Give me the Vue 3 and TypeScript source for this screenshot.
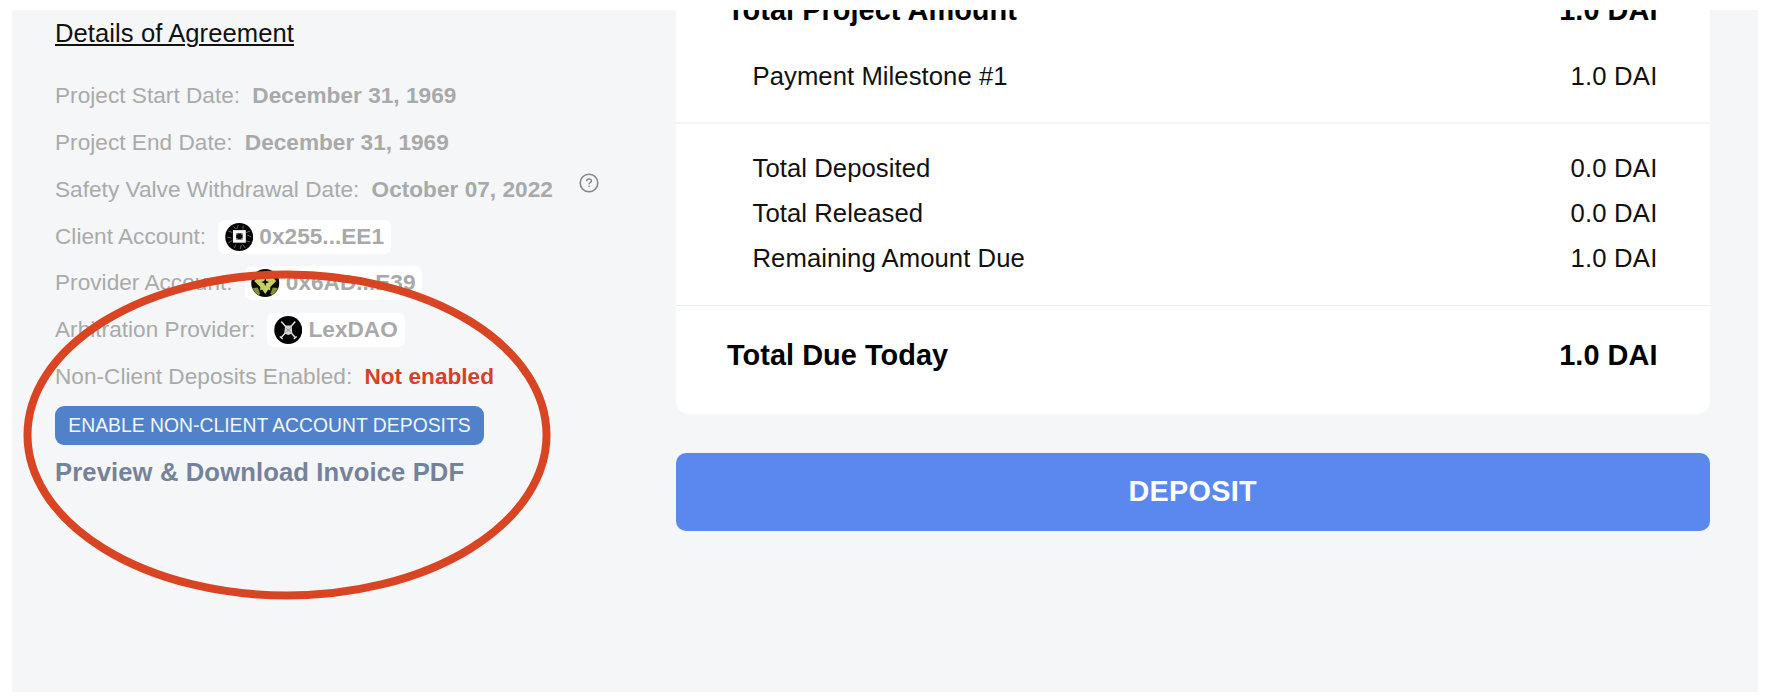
<script setup lang="ts">
interface Row { label: string; value: string; kind: 'date' | 'account' | 'status'; icon?: 'client' | 'provider' | 'lex'; help?: boolean }
interface Amount { label: string; value: string }

const details: Row[] = [
  { label: 'Project Start Date:', value: 'December 31, 1969', kind: 'date' },
  { label: 'Project End Date:', value: 'December 31, 1969', kind: 'date' },
  { label: 'Safety Valve Withdrawal Date:', value: 'October 07, 2022', kind: 'date', help: true },
  { label: 'Client Account:', value: '0x255...EE1', kind: 'account', icon: 'client' },
  { label: 'Provider Account:', value: '0x6AD...E39', kind: 'account', icon: 'provider' },
  { label: 'Arbitration Provider:', value: 'LexDAO', kind: 'account', icon: 'lex' },
  { label: 'Non-Client Deposits Enabled:', value: 'Not enabled', kind: 'status' },
]
const milestones: Amount[] = [{ label: 'Payment Milestone #1', value: '1.0 DAI' }]
const totals: Amount[] = [
  { label: 'Total Deposited', value: '0.0 DAI' },
  { label: 'Total Released', value: '0.0 DAI' },
  { label: 'Remaining Amount Due', value: '1.0 DAI' },
]
</script>

<template>
  <div class="page">
    <main class="panel">
      <section class="details">
        <h2 class="heading">Details of Agreement</h2>
        <div v-for="row in details" :key="row.label" class="row">
          <span class="label">{{ row.label }}</span>
          <span v-if="row.kind === 'account'" class="chip">
            <svg v-if="row.icon === 'client'" class="avatar" viewBox="0 0 28 28">
              <circle cx="14" cy="14" r="14" fill="#050505" />
              <path d="M8 3l2.500 3M13 2l-1.500 4M18 2.500l-.5 4M25 8l-4 1.500M26 14l-4-2M25 19l-4-1M20 25l-2.500-3.500M15 26l1-4M9 25l1.500-3.500M3 20l4-2.500M2 14l4 1M3 8l4 1.500" fill="none" stroke="#666" stroke-width="1" />
              <rect x="9.300" y="8.700" width="9.700" height="9.400" fill="#050505" stroke="#f4f4f4" stroke-width="3.200" />
              <path d="M11 10.400h1.200v1.200H11zM16.100 10.400h1.200v1.200h-1.200zM11 15.200h1.200v1.200H11zM16.100 15.200h1.200v1.200h-1.200z" fill="#e6e6e6" />
            </svg>
            <svg v-else-if="row.icon === 'provider'" class="avatar" viewBox="0 0 28 28">
              <circle cx="14" cy="14" r="14" fill="#080a04" />
              <path d="M1.500 19l5-.5 2.500 6.500-2 1A14 14 0 0 1 1.500 19zM26.500 19l-5-.5-2.500 6.500 2 1a14 14 0 0 0 5.500-7z" fill="#858d37" />
              <path d="M3 12l4-4 4 1h6l4-1 4 4-6 6v3.500l-2-1-3 4.500-3-4.500-2 1V18z" fill="#c6cf62" />
              <path d="M14 9l1 3 3 1-3 1.200-1 3-1-3-3-1.200 3-1z" fill="#080a04" />
            </svg>
            <svg v-else class="avatar" viewBox="0 0 28 28">
              <circle cx="14" cy="14" r="14" fill="#020202" />
              <path d="M7 5.500l14 16M21 5.500l-14 16M5.500 20.500l3 2.500M22.500 20.500l-3 2.500" stroke="#e4e4e4" stroke-width="1.400" />
              <path d="M10.800 9.500h6.700l.5 8-4 1.500-4-1.500z" fill="#d4d4d4" />
              <path d="M11.500 12l5 4M16.500 12l-5 4" stroke="#9a9a9a" stroke-width="1" />
            </svg>
            <span>{{ row.value }}</span>
          </span>
          <span v-else class="value" :class="{ off: row.kind === 'status' }">{{ row.value }}</span>
          <svg v-if="row.help" class="help" viewBox="0 0 20 20" fill="none">
            <circle cx="10" cy="10" r="8.800" stroke="#858585" stroke-width="1.600" />
            <path d="M7.700 8.200C7.700 6.700 8.600 6 10 6s2.400.8 2.400 2c0 1.700-2.300 1.600-2.300 3.400M10.100 12.600v1.500" stroke="#8c8c8c" stroke-width="1.500" />
          </svg>
        </div>
        <button class="enable">ENABLE NON-CLIENT ACCOUNT DEPOSITS</button>
        <a class="pdf">Preview &amp; Download Invoice PDF</a>
      </section>

      <section class="payment">
        <div class="card">
          <div class="group first">
            <div class="line strong"><span>Total Project Amount</span><span>1.0 DAI</span></div>
            <div v-for="m in milestones" :key="m.label" class="line sub"><span>{{ m.label }}</span><span class="amount">{{ m.value }}</span></div>
          </div>
          <div class="group second">
            <div v-for="t in totals" :key="t.label" class="line sub"><span>{{ t.label }}</span><span class="amount">{{ t.value }}</span></div>
          </div>
          <div class="group third">
            <div class="line strong"><span>Total Due Today</span><span>1.0 DAI</span></div>
          </div>
        </div>
        <button class="deposit">DEPOSIT</button>
      </section>

      <svg class="annotation" viewBox="0 0 530 334">
        <ellipse cx="265" cy="167" rx="259.500" ry="160.500" fill="none" stroke="#d94422" stroke-width="8" />
      </svg>
    </main>
  </div>
</template>

<style>
body { margin: 0; background: #fff; }
</style>

<style scoped>
.page {
  box-sizing: border-box;
  width: 1772px;
  height: 698px;
  padding: 10px 14px 6px 12px;
  overflow: hidden;
  font-family: "Liberation Sans", Arial, sans-serif;
  background: #fff;
}
.panel {
  position: relative;
  display: flex;
  height: 682px;
  overflow: hidden;
  background: #f4f6f8;
}
.details {
  display: flex;
  flex-direction: column;
  align-items: flex-start;
  box-sizing: border-box;
  width: 664px;
  padding: 8px 0 0 43px;
}
.heading {
  margin: 0 0 24.800px;
  font-size: 25.600px;
  font-weight: 400;
  line-height: 30px;
  letter-spacing: 0.07px;
  color: #111;
  text-decoration: underline;
  text-decoration-thickness: 1.500px;
  text-underline-offset: 2px;
}
.row {
  display: flex;
  align-items: center;
  height: 46.800px;
  font-size: 22.600px;
  line-height: 34px;
  letter-spacing: 0.1px;
  color: #aaa;
  white-space: nowrap;
}
.label { letter-spacing: 0.03px; }
.value { margin-left: 12.200px; font-weight: 700; letter-spacing: 0.03px; color: #a9a9a9; }
.off { color: #d83f26; }
.chip {
  display: flex;
  align-items: center;
  gap: 6px;
  height: 34px;
  margin-left: 12.200px;
  padding: 0 7px 0 6.500px;
  border-radius: 7px;
  background: #fff;
  font-weight: 700;
  letter-spacing: 0.03px;
  color: #a9a9a9;
}
.avatar { width: 28.500px; height: 28px; }
.help { width: 20px; height: 20px; margin: 0 0 14px 26.500px; }
.enable {
  height: 39px;
  margin: 5.600px 0 0;
  padding: 0;
  width: 429px;
  border: 0;
  border-radius: 9px;
  background: #5181c8;
  color: #f2f6fc;
  font: 400 19.350px/39px "Liberation Sans", Arial, sans-serif;
  white-space: nowrap;
}
.pdf {
  margin-top: 12px;
  font-size: 25.600px;
  font-weight: 700;
  line-height: 30px;
  letter-spacing: 0.13px;
  color: #75839a;
}
.payment { width: 1033.500px; }
.card {
  height: 404px;
  overflow: hidden;
  border-radius: 0 0 13px 13px;
  background: #fff;
}
.group { display: flow-root; box-sizing: border-box; padding-right: 52px; }
.first { height: 114px; border-bottom: 2px solid #f3f4f9; }
.second { height: 182px; padding-top: 22px; border-bottom: 1px solid #eaeef6; }
.third { padding-top: 29px; }
.line { display: flex; justify-content: space-between; white-space: nowrap; }
.strong {
  padding-left: 51px;
  font-size: 28.900px;
  font-weight: 700;
  line-height: 40px;
  letter-spacing: 0.05px;
  color: #000;
}
.first .strong { margin: -20px 0 24px; }
.sub {
  padding-left: 76.500px;
  font-size: 25.700px;
  line-height: 45.200px;
  letter-spacing: 0.05px;
  color: #111;
}
.amount { letter-spacing: 0.2px; }
.deposit {
  display: block;
  width: 100%;
  height: 77.500px;
  margin: 39px 0 0;
  padding: 0;
  border: 0;
  border-radius: 10px;
  background: #5a88ef;
  color: #fff;
  font: 700 28.800px/77px "Liberation Sans", Arial, sans-serif;
  letter-spacing: 0.3px;
}
/* Highlight ring floating over the details column */
.annotation {
  position: absolute;
  left: 9.500px;
  top: 258px;
  width: 530px;
  height: 334px;
  pointer-events: none;
}
</style>
